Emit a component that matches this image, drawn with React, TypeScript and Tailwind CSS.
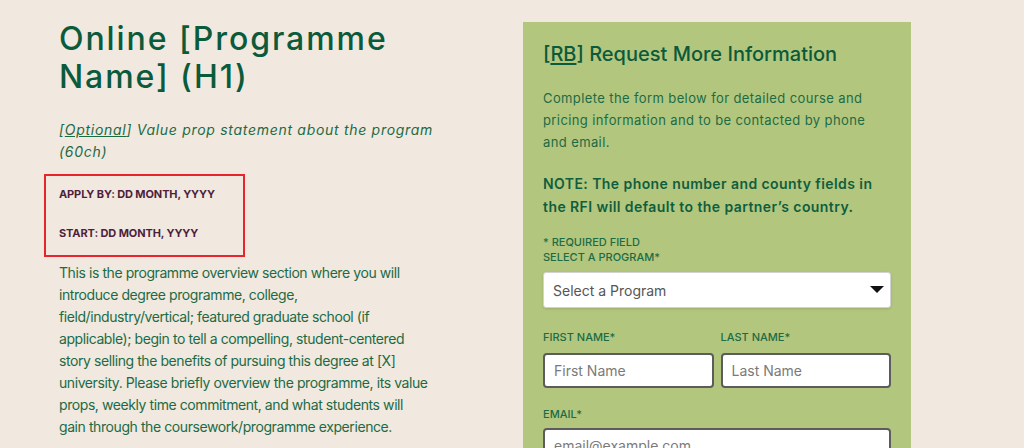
import { ChangeEvent, useState } from "react";

function DateBox() {
  return (
    <div className="-ml-[15px] mt-[11px] w-[201px] border-2 border-[#e8242c] pl-[13px] pt-[10px] pb-[14px]">
      <div className="text-[11px] leading-4 font-bold tracking-[-0.01em] text-[#4e1f3b]">
        APPLY BY: DD MONTH, YYYY
      </div>
      <div className="mt-[23px] text-[11px] leading-4 font-bold tracking-[-0.01em] text-[#4e1f3b]">
        START: DD MONTH, YYYY
      </div>
    </div>
  );
}

function RequestForm() {
  const [program, setProgram] = useState("");
  const [firstName, setFirstName] = useState("");
  const [lastName, setLastName] = useState("");
  const [email, setEmail] = useState("");

  const labelClass =
    "block text-[11px] leading-[15px] font-medium uppercase text-[#1c6b45]";
  const inputClass =
    "w-full h-[35px] rounded-[4px] border-2 border-[#5c5c5c] bg-white px-[9px] text-[14px] text-[#333] placeholder:text-[#7a7a7a] outline-none";

  return (
    <div className="mt-[2px] w-[388px] h-[460px] bg-[#b3c67e] px-5 pt-[18px]">
      <h2 className="text-[20px] leading-7 font-medium text-[#0b5a3b]">
        [<span className="underline underline-offset-2">RB</span>] Request
        More Information
      </h2>
      <p className="mt-[19px] text-[13px] leading-[22px] tracking-[0.03em] text-[#1c6b45]">
        Complete the form below for detailed course and pricing information
        and to be contacted by phone and email.
      </p>
      <p className="mt-[19px] text-[14px] leading-[23px] font-semibold tracking-[0.03em] text-[#0f5e3e]">
        NOTE: The phone number and county fields in the RFI will default to
        the partner’s country.
      </p>

      <form className="mt-[17px]" onSubmit={(e) => e.preventDefault()}>
        <div className={labelClass}>* Required Field</div>
        <label htmlFor="program" className={labelClass}>
          Select a Program*
        </label>
        <div className="relative mt-[7px]">
          <select
            id="program"
            value={program}
            onChange={(e: ChangeEvent<HTMLSelectElement>) =>
              setProgram(e.target.value)
            }
            className="w-full h-9 appearance-none rounded-[3px] border border-[#d2d2d2] bg-white px-[9px] text-[14px] text-[#555] shadow-sm outline-none"
          >
            <option value="">Select a Program</option>
            <option value="mba">Online MBA</option>
          </select>
          <svg
            className="pointer-events-none absolute right-[7px] top-[14px]"
            width="14"
            height="8"
            viewBox="0 0 14 8"
          >
            <path d="M0 0 H14 L7 7 Z" fill="#111" />
          </svg>
        </div>

        <div className="mt-[22px] grid grid-cols-2 gap-[7px]">
          <div>
            <label htmlFor="first-name" className={labelClass}>
              First Name*
            </label>
            <input
              id="first-name"
              type="text"
              placeholder="First Name"
              value={firstName}
              onChange={(e) => setFirstName(e.target.value)}
              className={`mt-[8px] ${inputClass}`}
            />
          </div>
          <div>
            <label htmlFor="last-name" className={labelClass}>
              Last Name*
            </label>
            <input
              id="last-name"
              type="text"
              placeholder="Last Name"
              value={lastName}
              onChange={(e) => setLastName(e.target.value)}
              className={`mt-[8px] ${inputClass}`}
            />
          </div>
        </div>

        <label htmlFor="email" className={`mt-[19px] ${labelClass}`}>
          Email*
        </label>
        <input
          id="email"
          type="email"
          placeholder="email@example.com"
          value={email}
          onChange={(e) => setEmail(e.target.value)}
          className={`mt-[6px] ${inputClass}`}
        />
      </form>
    </div>
  );
}

export default function App() {
  return (
    <div className="h-[448px] overflow-hidden bg-[#f1e8df] font-['Inter','Noto_Sans',sans-serif]">
      <div className="flex pl-[59px] pt-5">
        <div className="w-[382px]">
          <h1 className="text-[32px] leading-[38px] font-medium tracking-[0.06em] text-[#0b5a3b]">
            Online [Programme Name] (H1)
          </h1>
          <p className="mt-[23px] text-[14px] leading-[22px] italic tracking-[0.05em] text-[#1c6b45]">
            [<span className="underline">Optional</span>] Value prop statement
            about the program (60ch)
          </p>

          <DateBox />

          <p className="mt-[5px] w-[392px] text-[14px] leading-[22px] tracking-[-0.03em] text-[#1c6b45]">
            This is the programme overview section where you will
            <br />
            introduce degree programme, college,
            <br />
            field/industry/vertical; featured graduate school (if
            <br />
            applicable); begin to tell a compelling, student-centered
            <br />
            story selling the benefits of pursuing this degree at [X]
            <br />
            university. Please briefly overview the programme, its value
            <br />
            props, weekly time commitment, and what students will
            <br />
            gain through the coursework/programme experience.
          </p>
        </div>

        <div className="ml-[82px]">
          <RequestForm />
        </div>
      </div>
    </div>
  );
}
